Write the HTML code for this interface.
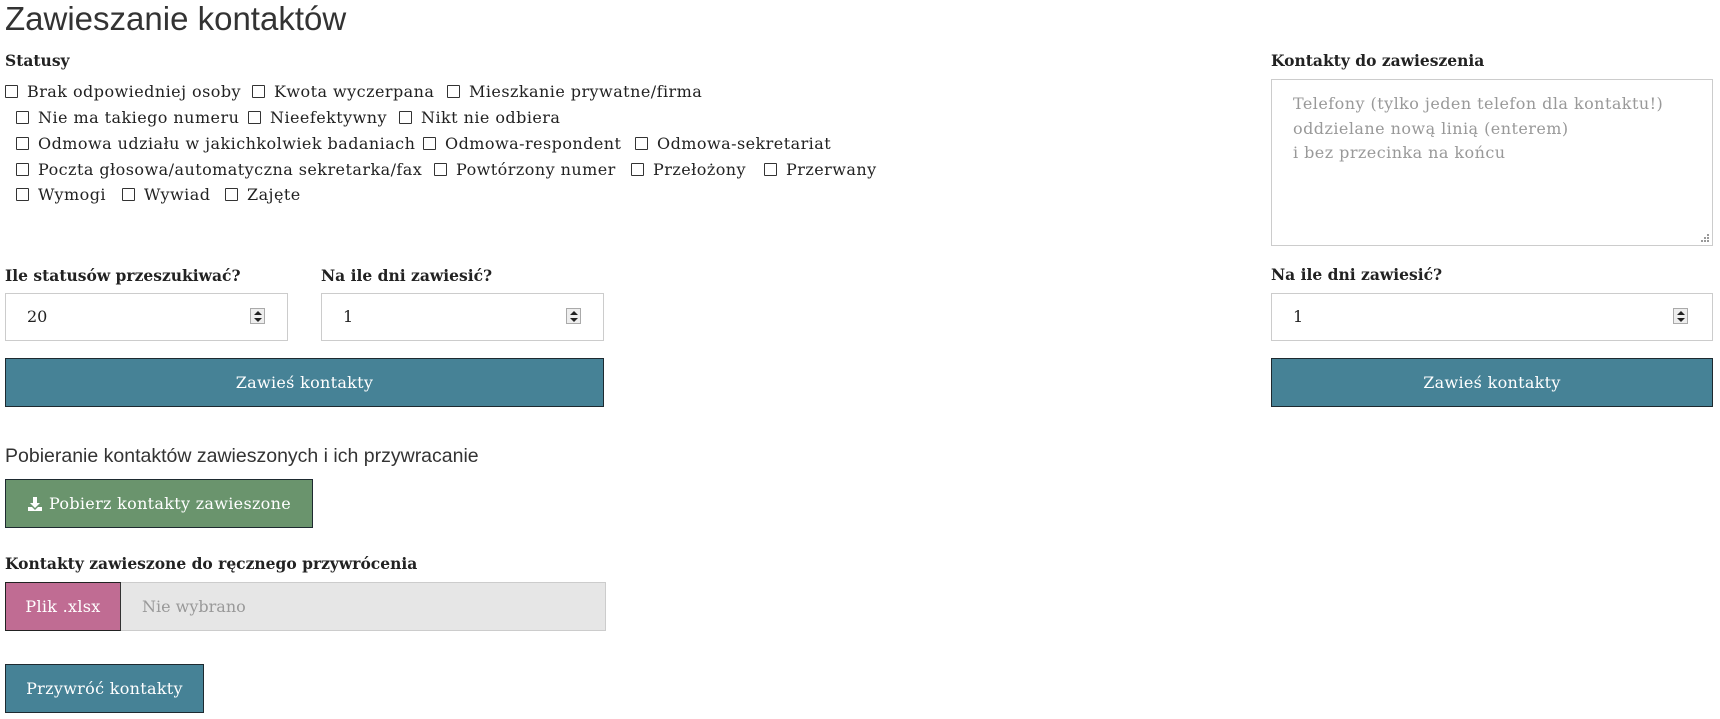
<!DOCTYPE html>
<html><head><meta charset="utf-8">
<style>
*{box-sizing:border-box;margin:0;padding:0}
body{width:1720px;height:719px;background:#fff;position:relative;overflow:hidden;font-family:"DejaVu Serif","Liberation Serif",serif;color:#222}
.a{position:absolute;white-space:nowrap}
.sans{font-family:"Liberation Sans",sans-serif;font-weight:300;color:#333}
.lbl{font-weight:bold;font-size:15.5px;line-height:18px;color:#222}
.cb{position:absolute;width:13px;height:13px;border:1px solid #333;background:#fff;border-radius:1px}
.ct{position:absolute;font-size:16px;letter-spacing:0.45px;line-height:18px;white-space:nowrap;color:#222}
.inp{position:absolute;border:1px solid #ccc;background:#fff;font-size:16px}
.inp span{position:absolute;left:21px;top:13px}
.spin{position:absolute;width:15px;height:16px;border:1px solid #aaa;background:#eee;top:14px}
.spin:before{content:"";position:absolute;left:3px;top:2px;border-left:4px solid transparent;border-right:4px solid transparent;border-bottom:4px solid #222}
.spin:after{content:"";position:absolute;left:3px;top:9px;border-left:4px solid transparent;border-right:4px solid transparent;border-top:4px solid #222}
.btn{position:absolute;background:#468296;border:1px solid #1e2a30;color:#fff;font-size:16px;letter-spacing:0.3px;display:flex;align-items:center;justify-content:center}
</style></head><body>
<div class="a sans" style="left:5px;top:-1px;font-size:33px;line-height:40px">Zawieszanie kontaktów</div>
<div class="a lbl" style="left:5px;top:52px">Statusy</div>

<div class="cb" style="left:5px;top:85px"></div><div class="ct" style="left:27px;top:83px">Brak odpowiedniej osoby</div>
<div class="cb" style="left:252px;top:85px"></div><div class="ct" style="left:274px;top:83px">Kwota wyczerpana</div>
<div class="cb" style="left:447px;top:85px"></div><div class="ct" style="left:469px;top:83px">Mieszkanie prywatne/firma</div>

<div class="cb" style="left:16px;top:111px"></div><div class="ct" style="left:38px;top:109px">Nie ma takiego numeru</div>
<div class="cb" style="left:248px;top:111px"></div><div class="ct" style="left:270px;top:109px">Nieefektywny</div>
<div class="cb" style="left:399px;top:111px"></div><div class="ct" style="left:421px;top:109px">Nikt nie odbiera</div>

<div class="cb" style="left:16px;top:137px"></div><div class="ct" style="left:38px;top:135px">Odmowa udziału w jakichkolwiek badaniach</div>
<div class="cb" style="left:423px;top:137px"></div><div class="ct" style="left:445px;top:135px">Odmowa-respondent</div>
<div class="cb" style="left:635px;top:137px"></div><div class="ct" style="left:657px;top:135px">Odmowa-sekretariat</div>

<div class="cb" style="left:16px;top:163px"></div><div class="ct" style="left:38px;top:161px">Poczta głosowa/automatyczna sekretarka/fax</div>
<div class="cb" style="left:434px;top:163px"></div><div class="ct" style="left:456px;top:161px">Powtórzony numer</div>
<div class="cb" style="left:631px;top:163px"></div><div class="ct" style="left:653px;top:161px">Przełożony</div>
<div class="cb" style="left:764px;top:163px"></div><div class="ct" style="left:786px;top:161px">Przerwany</div>

<div class="cb" style="left:16px;top:188px"></div><div class="ct" style="left:38px;top:186px">Wymogi</div>
<div class="cb" style="left:122px;top:188px"></div><div class="ct" style="left:144px;top:186px">Wywiad</div>
<div class="cb" style="left:225px;top:188px"></div><div class="ct" style="left:247px;top:186px">Zajęte</div>

<div class="a lbl" style="left:5px;top:267px">Ile statusów przeszukiwać?</div>
<div class="a lbl" style="left:321px;top:267px">Na ile dni zawiesić?</div>
<div class="inp" style="left:5px;top:293px;width:283px;height:48px"><span>20</span><div class="spin" style="left:244px"></div></div>
<div class="inp" style="left:321px;top:293px;width:283px;height:48px"><span>1</span><div class="spin" style="left:244px"></div></div>
<div class="btn" style="left:5px;top:358px;width:599px;height:49px">Zawieś kontakty</div>

<div class="a lbl" style="left:1271px;top:52px">Kontakty do zawieszenia</div>
<div class="inp" style="left:1271px;top:79px;width:442px;height:167px;color:#999;line-height:24.5px;padding:12px 0 0 21px;font-size:16px;letter-spacing:0.45px">Telefony (tylko jeden telefon dla kontaktu!)<br>oddzielane nową linią (enterem)<br>i bez przecinka na końcu
<svg style="position:absolute;right:3px;bottom:3px" width="8" height="8"><g fill="#999"><rect x="6" y="0" width="2" height="2"/><rect x="3" y="3" width="2" height="2"/><rect x="6" y="3" width="2" height="2"/><rect x="0" y="6" width="2" height="2"/><rect x="3" y="6" width="2" height="2"/><rect x="6" y="6" width="2" height="2"/></g></svg></div>
<div class="a lbl" style="left:1271px;top:266px">Na ile dni zawiesić?</div>
<div class="inp" style="left:1271px;top:293px;width:442px;height:48px"><span>1</span><div class="spin" style="left:401px"></div></div>
<div class="btn" style="left:1271px;top:358px;width:442px;height:49px">Zawieś kontakty</div>

<div class="a sans" style="left:5px;top:443px;font-size:19.5px;line-height:26px">Pobieranie kontaktów zawieszonych i ich przywracanie</div>
<div class="btn" style="left:5px;top:479px;width:308px;height:49px;background:#6a946d">
<svg width="16" height="16" viewBox="0 0 16 16" style="margin-right:6px"><path d="M6 1h4v6h3l-5 5-5-5h3z" fill="#fff"/><path d="M1 11h4l3 3 3-3h4v4H1z" fill="#fff"/></svg>Pobierz kontakty zawieszone</div>
<div class="a lbl" style="left:5px;top:555px">Kontakty zawieszone do ręcznego przywrócenia</div>
<div class="a" style="left:120px;top:582px;width:486px;height:49px;background:#e6e6e6;border:1px solid #ccc;color:#999;font-size:16px;line-height:47px;padding-left:21px">Nie wybrano</div>
<div class="btn" style="left:5px;top:582px;width:116px;height:49px;background:#c06c93;border-color:#222 #333 #222 #222">Plik .xlsx</div>
<div class="btn" style="left:5px;top:664px;width:199px;height:49px">Przywróć kontakty</div>
</body></html>
